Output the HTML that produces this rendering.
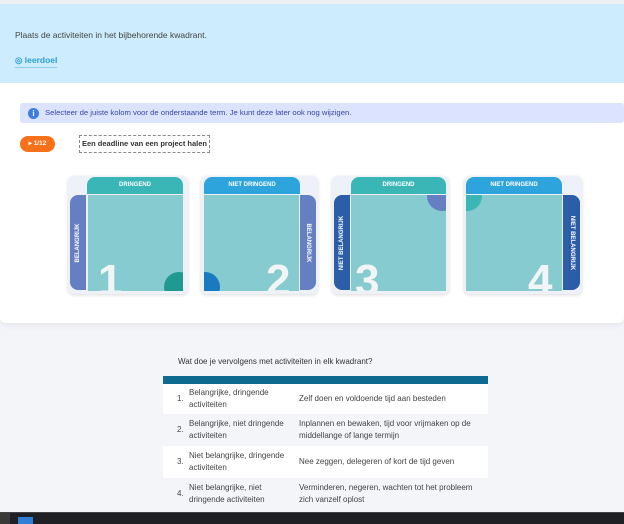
<!DOCTYPE html>
<html><head><meta charset="utf-8"><style>
*{margin:0;padding:0;box-sizing:border-box}
body{width:624px;height:524px;overflow:hidden;background:#f4f5f9;font-family:"Liberation Sans",sans-serif;position:relative;color:#333}
.a{position:absolute}
.card{position:absolute;top:176px;height:118px;background:#eef1f7;border-radius:5px;box-shadow:0 1px 3px rgba(0,0,0,.15);overflow:hidden}
.hd{position:absolute;height:17px;border-radius:8px 8px 0 0;color:#fff;font-size:6px;font-weight:bold;text-align:center;line-height:17px}
.sq{position:absolute;background:#86cbcf;overflow:hidden}
.bar{position:absolute;border-radius:8px 0 0 8px;color:#fff;font-size:6px;font-weight:bold}
.bar span{position:absolute;left:50%;top:50%;white-space:nowrap;transform:translate(-50%,-50%) rotate(-90deg)}
.bar.r{border-radius:0 8px 8px 0}
.bar.r span{transform:translate(-50%,-50%) rotate(90deg)}
.num{position:absolute;color:#f2f5f6;font-size:44px;font-weight:bold;line-height:1}
.q{position:absolute;border-radius:50%;width:30px;height:30px}
table{border-collapse:collapse;font-size:8px;color:#444}
td{vertical-align:middle;line-height:12px}
</style></head><body>
<div class="a" style="left:0;top:0;width:624px;height:4px;background:#eceef1"></div>
<div class="a" style="left:0;top:4px;width:624px;height:79px;background:#cdecfd"></div>
<div class="a" style="left:15px;top:30px;font-size:8.5px;color:#444">Plaats de activiteiten in het bijbehorende kwadrant.</div>
<div class="a" style="left:15px;top:55px;font-size:8.5px;color:#2a9fd8;font-weight:bold;border-bottom:1px solid #8fd0f2;padding-bottom:1px">◎ leerdoel</div>
<div class="a" style="left:0;top:83px;width:624px;height:240px;background:#fff;border-radius:0 0 6px 6px;box-shadow:0 3px 6px rgba(0,0,0,.05)"></div>
<div class="a" style="left:20px;top:103px;width:604px;height:20px;background:#dce3fe;border-radius:3px"></div>
<div class="a" style="left:28px;top:108px;width:11px;height:11px;border-radius:50%;background:#3d7de0;color:#fff;font-size:8px;font-weight:bold;text-align:center;line-height:11px">i</div>
<div class="a" style="left:45px;top:108px;font-size:7.7px;color:#3646a8;white-space:nowrap">Selecteer de juiste kolom voor de onderstaande term. Je kunt deze later ook nog wijzigen.</div>
<div class="a" style="left:20px;top:136px;width:35px;height:16px;border-radius:8px;background:#f7701a;color:#fff;font-size:6.5px;font-weight:bold;line-height:16px;text-align:center">▸ 1/12</div>
<div class="a" style="left:79px;top:135px;width:131px;height:18px;border:1px dashed #888;font-size:7.5px;font-weight:bold;color:#333;line-height:16px;text-align:center;white-space:nowrap">Een deadline van een project halen</div>

<div class="card" style="left:68px;width:120px">
 <div class="hd" style="left:19px;top:1px;width:96px;background:#3bb6b6">DRINGEND</div>
 <div class="bar" style="left:2px;top:19px;width:16px;height:95px;background:#6480c2"><span>BELANGRIJK</span></div>
 <div class="sq" style="left:20px;top:19px;width:95px;height:96px"><div class="num" style="left:10px;top:64px">1</div><div class="q" style="left:76px;top:77px;background:#1e9a90"></div></div>
</div>
<div class="card" style="left:201px;width:117px">
 <div class="hd" style="left:3px;top:1px;width:96px;background:#2ea4dd">NIET DRINGEND</div>
 <div class="bar r" style="left:99px;top:19px;width:16px;height:95px;background:#6480c2"><span>BELANGRIJK</span></div>
 <div class="sq" style="left:3px;top:19px;width:95px;height:96px"><div class="num" style="left:62px;top:64px">2</div><div class="q" style="left:-14px;top:77px;background:#1a7ac0"></div></div>
</div>
<div class="card" style="left:332px;width:117px">
 <div class="hd" style="left:19px;top:1px;width:95px;background:#3bb6b6">DRINGEND</div>
 <div class="bar" style="left:2px;top:19px;width:16px;height:95px;background:#2b5da8"><span>NIET BELANGRIJK</span></div>
 <div class="sq" style="left:19px;top:19px;width:95px;height:96px"><div class="num" style="left:4px;top:64px">3</div><div class="q" style="left:76px;top:-14px;background:#6480c2"></div></div>
</div>
<div class="card" style="left:464px;width:118px">
 <div class="hd" style="left:2px;top:1px;width:96px;background:#2ea4dd">NIET DRINGEND</div>
 <div class="bar r" style="left:99px;top:19px;width:17px;height:95px;background:#2b5da8"><span>NIET BELANGRIJK</span></div>
 <div class="sq" style="left:2px;top:19px;width:96px;height:96px"><div class="num" style="left:62px;top:64px">4</div><div class="q" style="left:-14px;top:-14px;background:#3bb6b6"></div></div>
</div>

<div class="a" style="left:178px;top:357px;font-size:8px;color:#333">Wat doe je vervolgens met activiteiten in elk kwadrant?</div>
<div class="a" style="left:163px;top:376px;width:325px;height:8px;background:#0e6a8f"></div>
<table class="a" style="left:163px;top:384px;width:325px">
<tr style="background:#fff;height:30px"><td style="width:26px;padding-left:14px">1.</td><td style="width:110px">Belangrijke, dringende<br>activiteiten</td><td>Zelf doen en voldoende tijd aan besteden</td></tr>
<tr style="height:32px"><td style="padding-left:14px">2.</td><td>Belangrijke, niet dringende<br>activiteiten</td><td>Inplannen en bewaken, tijd voor vrijmaken op de<br>middellange of lange termijn</td></tr>
<tr style="background:#fff;height:32px"><td style="padding-left:14px">3.</td><td>Niet belangrijke, dringende<br>activiteiten</td><td>Nee zeggen, delegeren of kort de tijd geven</td></tr>
<tr style="height:32px"><td style="padding-left:14px">4.</td><td>Niet belangrijke, niet<br>dringende activiteiten</td><td>Verminderen, negeren, wachten tot het probleem<br>zich vanzelf oplost</td></tr>
</table>
<div class="a" style="left:0;top:512px;width:624px;height:12px;background:#1f2024;border-top:1px solid #444"></div>
<div class="a" style="left:0;top:513px;width:10px;height:11px;background:#3a3a3a"></div>
<div class="a" style="left:18px;top:517px;width:15px;height:7px;background:#2f7fd6"></div>
</body></html>
